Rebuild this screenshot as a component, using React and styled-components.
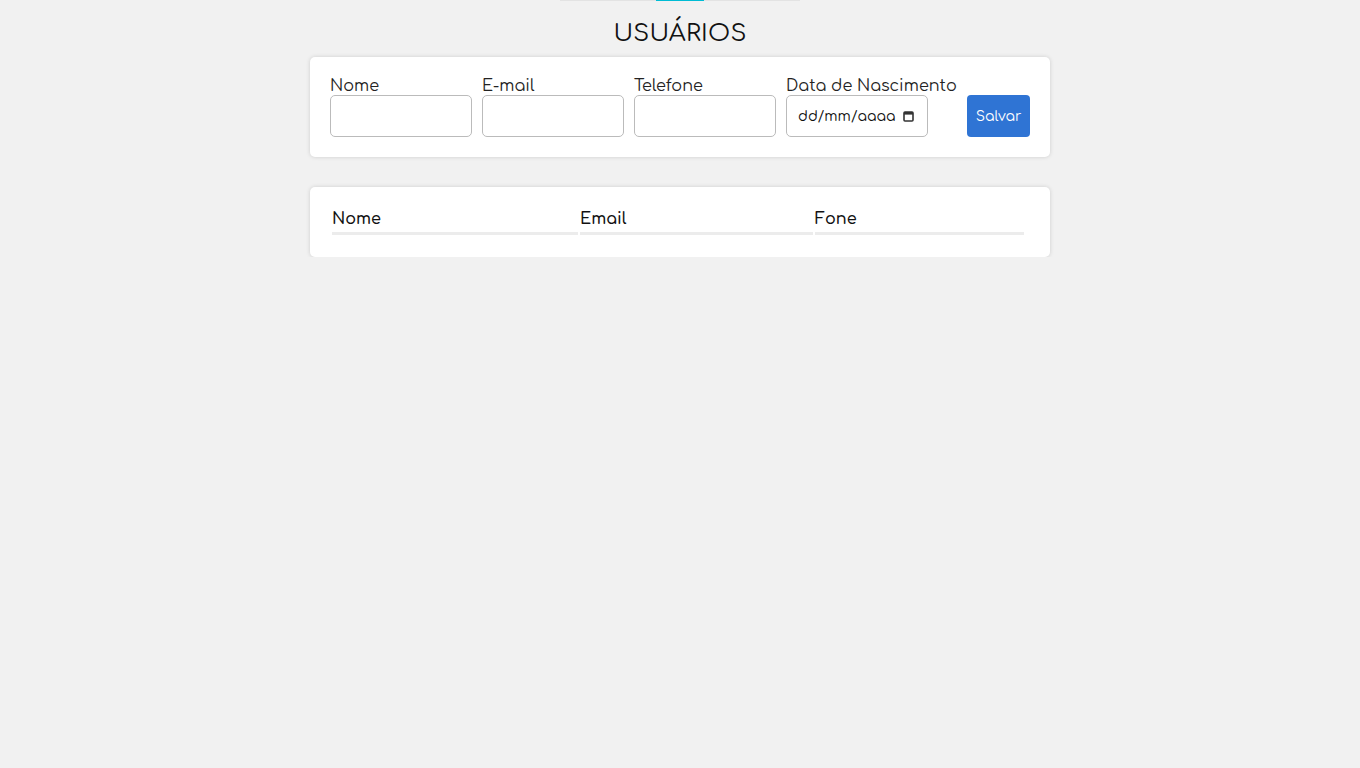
import React from "react";
import styled, { createGlobalStyle } from "styled-components";

const Global = createGlobalStyle`
  body {
    margin: 0;
    background: #f1f1f1;
    font-family: "Comfortaa", "Open Sans", sans-serif;
    color: #111;
  }
`;

const Loader = styled.div`
  width: 240px;
  height: 1px;
  margin: 0 auto;
  background: #e3e3e3;
  display: flex;
`;

const LoaderFill = styled.div`
  width: 48px;
  margin-left: 96px;
  background: #00bcd4;
`;

const Title = styled.h1`
  margin: 15px 0 5px;
  text-align: center;
  font-size: 24px;
  line-height: 36px;
  font-weight: 400;
  letter-spacing: 0.3px;
`;

const Card = styled.section`
  width: 740px;
  box-sizing: border-box;
  margin: ${(p) => p.$mt || 0}px auto 0;
  padding: 20px;
  background: #fff;
  border-radius: 5px;
  box-shadow: 0 0 4px rgba(0, 0, 0, 0.15);
`;

const Form = styled.form`
  display: flex;
  align-items: flex-end;
  gap: 10px;
`;

const Field = styled.div`
  display: flex;
  flex-direction: column;
`;

const Label = styled.label`
  font-size: 16px;
  line-height: 18px;
  color: #222;
`;

const Input = styled.input`
  width: 142px;
  height: 42px;
  box-sizing: border-box;
  border: 1px solid #bbb;
  border-radius: 5px;
  padding: 0 11px;
  font-family: inherit;
  font-size: 14px;
  background: #fff;
  color: #222;
  &::placeholder {
    color: #111;
  }
`;

const DateWrap = styled.div`
  position: relative;
  width: 142px;
  height: 42px;
`;

const CalendarIcon = styled.svg`
  position: absolute;
  right: 14px;
  top: 16px;
  width: 11px;
  height: 11px;
  pointer-events: none;
`;

const Button = styled.button`
  margin-left: auto;
  width: 63px;
  height: 42px;
  border: none;
  border-radius: 4px;
  background: #2f74d4;
  color: #fff;
  font-family: inherit;
  font-size: 14px;
  cursor: pointer;
`;

const Table = styled.table`
  width: 696px;
  border-spacing: 2px;
`;

const Th = styled.th`
  width: ${(p) => p.$w}px;
  text-align: left;
  font-weight: 600;
  font-size: 16px;
  line-height: 21px;
  padding: 0 0 2px;
  border-bottom: 3px solid #ececec;
  color: #111;
`;

function DateField() {
  return (
    <DateWrap>
      <Input type="text" placeholder="dd/mm/aaaa" />
      <CalendarIcon viewBox="0 0 11 11">
        <rect x="1" y="1" width="9" height="9" rx="1" fill="none" stroke="#333" strokeWidth="1.6" />
        <rect x="1" y="1" width="9" height="2.6" fill="#333" />
      </CalendarIcon>
    </DateWrap>
  );
}

export default function App() {
  return (
    <>
      <Global />
      <Loader>
        <LoaderFill />
      </Loader>
      <Title>USUÁRIOS</Title>
      <Card>
        <Form onSubmit={(e) => e.preventDefault()}>
          <Field>
            <Label>Nome</Label>
            <Input type="text" />
          </Field>
          <Field>
            <Label>E-mail</Label>
            <Input type="email" />
          </Field>
          <Field>
            <Label>Telefone</Label>
            <Input type="text" />
          </Field>
          <Field>
            <Label>Data de Nascimento</Label>
            <DateField />
          </Field>
          <Button type="submit">Salvar</Button>
        </Form>
      </Card>
      <Card $mt={30}>
        <Table>
          <thead>
            <tr>
              <Th $w={246}>Nome</Th>
              <Th $w={233}>Email</Th>
              <Th $w={209}>Fone</Th>
            </tr>
          </thead>
        </Table>
      </Card>
    </>
  );
}
